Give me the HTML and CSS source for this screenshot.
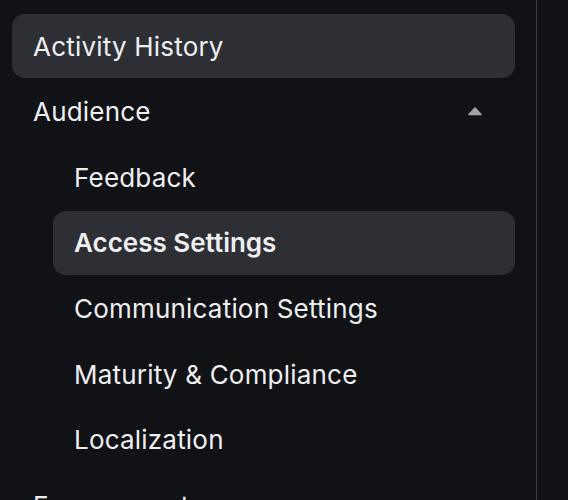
FILE: index.html
```html
<!DOCTYPE html>
<html>
<head>
<meta charset="utf-8">
<link rel="stylesheet" href="styles.css">
</head>
<body>
<div class="layout">
  <nav class="sidebar">
    <div class="item active">Activity History</div>
    <div class="item group">
      <span>Audience</span>
      <svg class="caret" width="14" height="9" viewBox="0 0 14 9"><path d="M7 1 L13 7.5 L1 7.5 Z" fill="#a3a3a8" stroke="#a3a3a8" stroke-width="1.6" stroke-linejoin="round"/></svg>
    </div>
    <div class="sub">
      <div class="item child">Feedback</div>
      <div class="item child selected">Access Settings</div>
      <div class="item child">Communication Settings</div>
      <div class="item child">Maturity &amp; Compliance</div>
      <div class="item child">Localization</div>
    </div>
    <div class="item">Engagement</div>
  </nav>
  <main class="content"></main>
</div>
</body>
</html>
```
FILE: styles.css
```css
html, body {
  margin: 0;
  padding: 0;
  background: #111216;
  height: 100%;
  overflow: hidden;
}
.layout {
  display: flex;
  height: 100%;
}
.sidebar {
  width: 503px;
  padding: 14px 21px 0 12px;
  border-right: 1px solid #3a3b40;
  display: flex;
  flex-direction: column;
  gap: 1.66px;
  font-family: "Inter", sans-serif;
  font-size: 26px;
  letter-spacing: 0.2px;
  color: #efeff1;
}
.sub {
  display: flex;
  flex-direction: column;
  gap: 1.66px;
  padding-left: 41px;
  flex-shrink: 0;
}
.item {
  height: 64px;
  flex-shrink: 0;
  display: flex;
  align-items: center;
  padding: 0 33px 0 21px;
  border-radius: 13px;
  box-sizing: border-box;
  white-space: nowrap;
}
.group {
  justify-content: space-between;
}
.active, .selected {
  background: #2e2f35;
}
.selected {
  font-weight: 600;
  letter-spacing: 0;
}
.caret {
  display: block;
}
.content {
  flex: 1;
}
```
